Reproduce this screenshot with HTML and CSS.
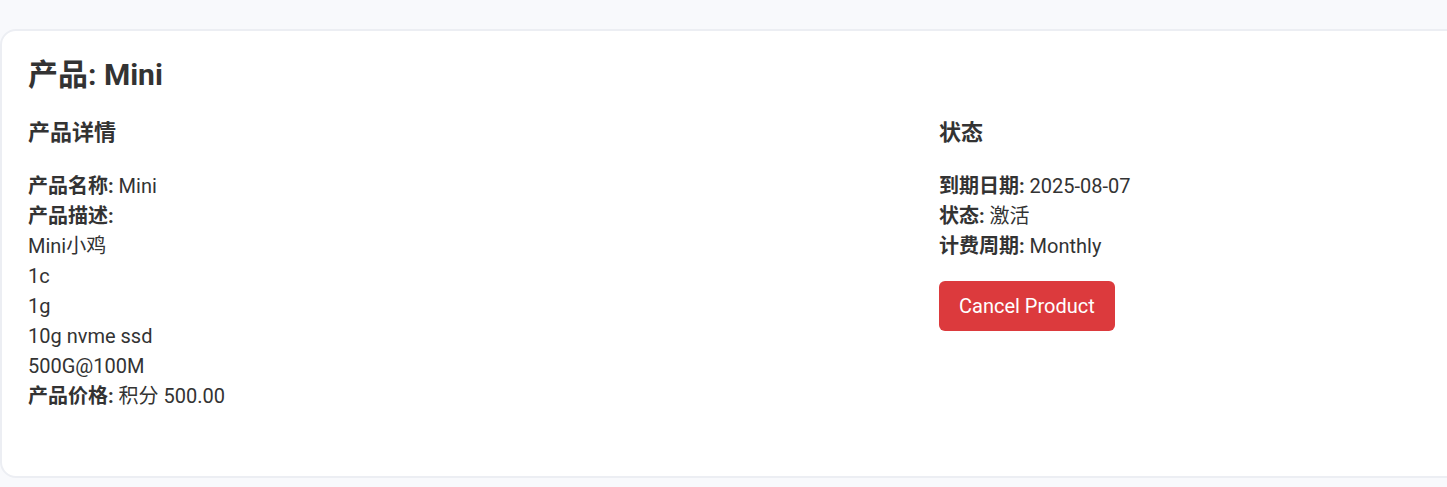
FILE: index.html
```html
<!DOCTYPE html>
<html lang="zh-CN">
<head>
  <meta charset="UTF-8" />
  <title>产品: Mini</title>
  <link rel="stylesheet" href="styles.css">
</head>
<body>
  <div class="card">
    <h2>产品: Mini</h2>
    <div class="columns">
      <div class="col">
        <h3>产品详情</h3>
        <p>
          <strong>产品名称:</strong> Mini<br/>
          <strong>产品描述:</strong><br/>
          Mini小鸡<br/>
          1c<br/>
          1g<br/>
          10g nvme ssd<br/>
          500G@100M<br/>
          <strong>产品价格:</strong> 积分 500.00
        </p>
      </div>
      <div class="col">
        <h3>状态</h3>
        <p>
          <strong>到期日期:</strong> 2025-08-07<br/>
          <strong>状态:</strong> 激活<br/>
          <strong>计费周期:</strong> Monthly
        </p>
        <button class="btn-cancel">Cancel Product</button>
      </div>
    </div>
  </div>
</body>
</html>
```

FILE: styles.css
```css
html, body {
  overflow: hidden;
}
body {
  margin: 0;
  padding-top: 29px;
  background: #f8f9fc;
  color: #333;
  font-family: Roboto, "Noto Sans CJK SC", sans-serif;
}
.card {
  background: #fff;
  border: 2px solid #eceef3;
  border-radius: 16px;
  margin-right: -60px;
  padding: 26px 28px 27px 26px;
  height: 449px;
  box-sizing: border-box;
}
h2 {
  font-size: 30px;
  line-height: 36px;
  font-weight: 700;
  margin: 0 0 27px;
}
.columns {
  display: grid;
  grid-template-columns: 911px 1fr;
}
h3 {
  font-size: 22px;
  line-height: 26px;
  font-weight: 700;
  margin: 0 0 25px;
}
p {
  font-size: 20px;
  line-height: 30px;
  margin: 0;
}
strong {
  font-weight: 700;
}
.btn-cancel {
  margin-top: 20px;
  background: #dc3a3d;
  color: #fff;
  border: none;
  border-radius: 6px;
  font-family: Roboto, sans-serif;
  font-size: 20px;
  line-height: 28px;
  padding: 11px 20px;
  cursor: pointer;
}
```
